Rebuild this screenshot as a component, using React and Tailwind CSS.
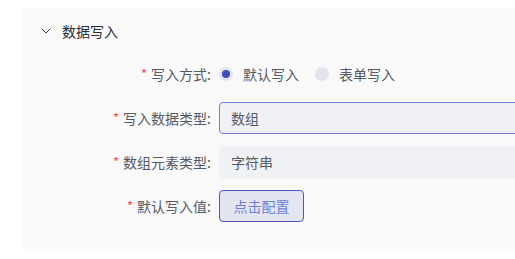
import { ChevronDown } from 'lucide-react'

function Label({ children }) {
  return (
    <div className="flex w-[196px] shrink-0 items-center justify-end pr-[8px] text-[14px] text-[#555a63]">
      <span className="mr-[4px] text-[13px] text-[#f5484f]">*</span>
      {children}:
    </div>
  )
}

function Radio({ checked, children }) {
  return (
    <label className="flex items-center gap-[10px] text-[14px] text-[#555a63]">
      <span className="flex h-[14px] w-[14px] items-center justify-center rounded-full bg-[#e3e5ee]">
        {checked && <span className="h-[8px] w-[8px] rounded-full bg-[#3e50bd]" />}
      </span>
      {children}
    </label>
  )
}

export default function App() {
  return (
    <div
      className="h-[259px] w-[515px] overflow-hidden bg-white pl-[23px] pt-[8px]"
      style={{ fontFamily: '"Noto Sans CJK SC", "Noto Sans", sans-serif' }}
    >
      <div className="h-[241px] w-[520px] rounded-sm bg-[#f9f9fa]">
        <div className="flex h-[46px] items-center pl-[15px] text-[14px] text-[#2b2e33]">
          <ChevronDown className="h-[16px] w-[16px]" strokeWidth={1.4} />
          <span className="ml-[8px]">数据写入</span>
        </div>
        <div className="mt-[4px] flex flex-col gap-[12px]">
          <div className="flex h-[32px] items-center">
            <Label>写入方式</Label>
            <div className="flex items-center gap-[16px]">
              <Radio checked>默认写入</Radio>
              <Radio>表单写入</Radio>
            </div>
          </div>
          <div className="flex items-center">
            <Label>写入数据类型</Label>
            <div className="flex h-[32px] flex-1 items-center rounded-[4px] border border-[#6e80d4] bg-[#f0f1f4] pl-[11px] text-[14px] text-[#555a63]">
              数组
            </div>
          </div>
          <div className="flex items-center">
            <Label>数组元素类型</Label>
            <div className="flex h-[32px] flex-1 items-center rounded-[4px] bg-[#f0f1f4] pl-[12px] text-[14px] text-[#555a63]">
              字符串
            </div>
          </div>
          <div className="flex items-center">
            <Label>默认写入值</Label>
            <button className="flex h-[32px] w-[85px] items-center justify-center rounded-[4px] border border-[#4657c0] bg-[#e3e6f0] text-[14px] text-[#6e80d4]">
              点击配置
            </button>
          </div>
        </div>
      </div>
    </div>
  )
}
